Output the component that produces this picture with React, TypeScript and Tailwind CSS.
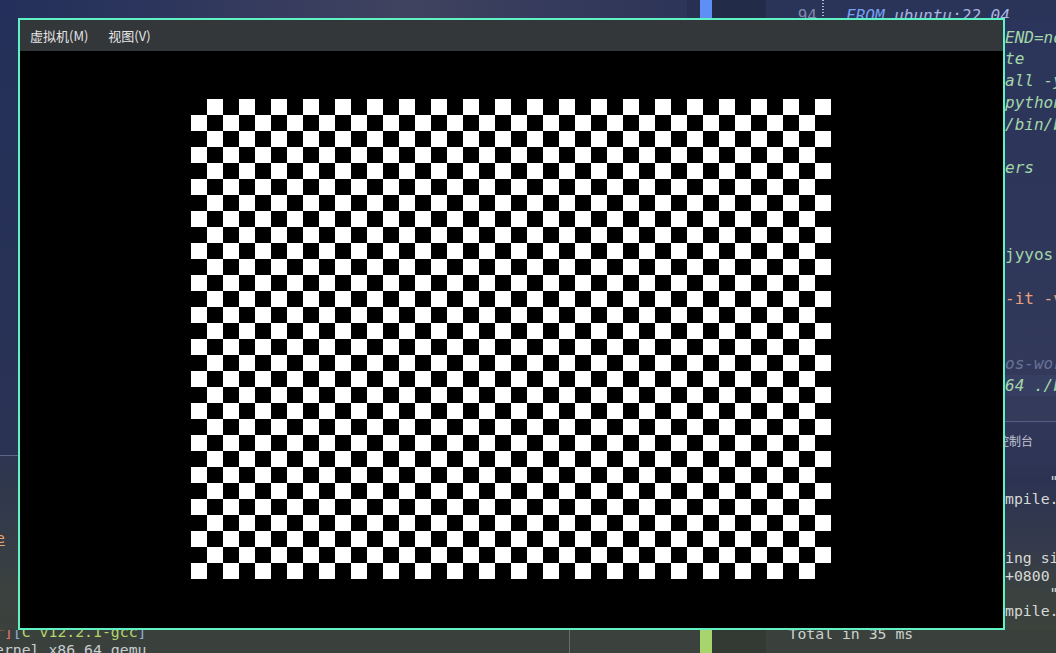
import React from "react";

const editorLines: { t: string; c: string; hl?: boolean }[] = [
  { t: "END=noninteractive", c: "text-[#a3d7a9] italic" },
  { t: "te", c: "text-[#a3d7a9] italic" },
  { t: "all -y", c: "text-[#a3d7a9] italic" },
  { t: "python3", c: "text-[#a3d7a9] italic" },
  { t: "/bin/bash", c: "text-[#a3d7a9] italic" },
  { t: "", c: "" },
  { t: "ers", c: "text-[#a3d7a9] italic" },
  { t: "", c: "" },
  { t: "", c: "" },
  { t: "", c: "" },
  { t: "jyyos", c: "text-[#a3d7a9]" },
  { t: "", c: "" },
  { t: "-it -v", c: "text-[#e8a07e]" },
  { t: "", c: "" },
  { t: "", c: "" },
  { t: "os-workbench", c: "text-[#69739a] italic" },
  { t: "64 ./build", c: "text-[#a3d7a9] italic", hl: true },
];

function Checkerboard() {
  return (
    <svg
      width={640}
      height={480}
      viewBox="0 0 640 480"
      shapeRendering="crispEdges"
      className="block mr-[1px] mb-[1px]"
    >
      <defs>
        <pattern id="cb" width={32} height={32} patternUnits="userSpaceOnUse">
          <rect width={32} height={32} fill="#000" />
          <rect x={16} y={0} width={16} height={16} fill="#fff" />
          <rect x={0} y={16} width={16} height={16} fill="#fff" />
        </pattern>
      </defs>
      <rect width={640} height={480} fill="url(#cb)" />
    </svg>
  );
}

export default function App() {
  return (
    <div className="w-[1056px] h-[653px] overflow-hidden flex flex-col bg-[#2c3458] font-['DejaVu_Sans_Mono',monospace]">
      {/* top strip */}
      <div className="h-[18px] shrink-0 flex overflow-hidden">
        <div className="w-[687px] bg-[linear-gradient(90deg,#24305b_0%,#2a345c_18%,#383d5f_42%,#3f435f_60%,#343a5c_82%,#2d3558_100%)]" />
        <div className="w-[13px] bg-[#283051]" />
        <div className="w-[12px] bg-[#5d8ff7]" />
        <div className="w-[54px] bg-[#222b47]" />
        <div className="flex-1 flex items-start bg-[#2a3358] text-[16px] leading-[21.75px]">
          <div className="w-[51px] shrink-0 text-right text-[#7f88ad] mt-[4.85px]">94</div>
          <div className="ml-[5px] w-[2px] h-full shrink-0 bg-[repeating-linear-gradient(180deg,#aab7dd_0px,#aab7dd_1px,transparent_1px,transparent_3px)]" />
          <div className="ml-[22px] mt-[4.85px] italic whitespace-pre">
            <span className="text-[#76a0f4]">FROM</span>
            <span className="text-[#a8b5e0]"> ubuntu:22.04</span>
          </div>
        </div>
      </div>

      {/* middle row */}
      <div className="h-[612px] shrink-0 flex">
        {/* left strip */}
        <div className="w-[18px] shrink-0 flex flex-col overflow-hidden">
          <div className="h-[437px] bg-[linear-gradient(180deg,#25305a_0%,#283256_70%,#2b3354_100%)]" />
          <div className="h-[1px] bg-[#5c6383]" />
          <div className="flex-1 bg-[linear-gradient(180deg,#2d3551_0%,#333a4a_35%,#3a413f_75%,#3b423d_100%)] pt-[72.6px] text-[14.8px] leading-[18.5px]">
            <div className="ml-[-4px] text-[#e5a46c] underline underline-offset-2">e</div>
          </div>
        </div>

        {/* VM window */}
        <div className="w-[987px] shrink-0 h-full border-2 border-[#5ef2c4] flex flex-col">
          <div className="h-[31px] shrink-0 bg-[#33373a] flex items-center gap-[20px] pl-[10px] text-[13px] text-[#e6e6e6] font-['Noto_Sans_CJK_SC',sans-serif]">
            <span>虚拟机(M)</span>
            <span>视图(V)</span>
          </div>
          <div className="flex-1 bg-black flex items-center justify-center">
            <Checkerboard />
          </div>
        </div>

        {/* right strip */}
        <div className="flex-1 flex flex-col overflow-hidden">
          <div className="h-[403px] shrink-0 pt-[8.6px] bg-[linear-gradient(180deg,#2b345a_0%,#2f375a_60%,#333a5a_100%)] text-[16px] leading-[21.75px]">
            {editorLines.map((l, i) => (
              <div
                key={i}
                className={`h-[21.75px] whitespace-pre ${l.c} ${l.hl ? "bg-[#363e62]" : ""}`}
              >
                {l.t}
              </div>
            ))}
          </div>
          <div className="h-[1px] shrink-0 bg-[#575e80]" />
          <div className="flex-1 flex flex-col bg-[linear-gradient(180deg,#30375a_0%,#2c3352_28%,#343a4c_58%,#3a413f_82%,#3c433d_100%)]">
            <div className="mt-[10.8px] h-[16px] leading-[16px] text-[12px] text-[#c3c6d4] whitespace-nowrap font-['Noto_Sans_CJK_SC',sans-serif]">
              <span className="ml-[-8px]">控制台</span>
            </div>
            <div className="mt-[23.4px] text-[14.8px] leading-[17.5px] text-[#d6d9d6] whitespace-pre">
              <div className="h-[17.5px]">{'     "'}</div>
              <div className="h-[17.5px]">mpile.json</div>
              <div className="h-[42px]" />
              <div className="h-[17.5px]">ing size</div>
              <div className="h-[17.5px]">+0800</div>
              <div className="h-[17.5px]">{'     "'}</div>
              <div className="h-[17.5px]">mpile.json</div>
            </div>
          </div>
        </div>
      </div>

      {/* bottom strip */}
      <div className="h-[23px] shrink-0 flex overflow-hidden">
        <div className="w-[569px] shrink-0 bg-[#3a413d] overflow-hidden text-[14.8px] leading-[18.5px] whitespace-pre">
          <div className="mt-[-7.4px] ml-[-5px]">
            <div>
              <span className="text-[#e89a6a]">r</span>
              <span className="text-[#e07474]">]</span>
              <span className="text-[#8ab4d8]">[</span>
              <span className="text-[#b5d56a]">C v12.2.1-gcc</span>
              <span className="text-[#8ab4d8]">]</span>
            </div>
            <div className="text-[#c9cdcf]">ernel x86_64 qemu</div>
          </div>
        </div>
        <div className="w-[1px] shrink-0 bg-[#676d68]" />
        <div className="w-[130px] shrink-0 bg-[#3b423e]" />
        <div className="w-[12px] shrink-0 bg-[#a8d46e]" />
        <div className="w-[54px] shrink-0 bg-[#333933]" />
        <div className="flex-1 bg-[#3a413c] pl-[22.5px] overflow-hidden text-[14.8px] leading-[17.5px] whitespace-pre">
          <div className="mt-[-5.3px] text-[#cdd1cd]">Total in 35 ms</div>
        </div>
      </div>
    </div>
  );
}
